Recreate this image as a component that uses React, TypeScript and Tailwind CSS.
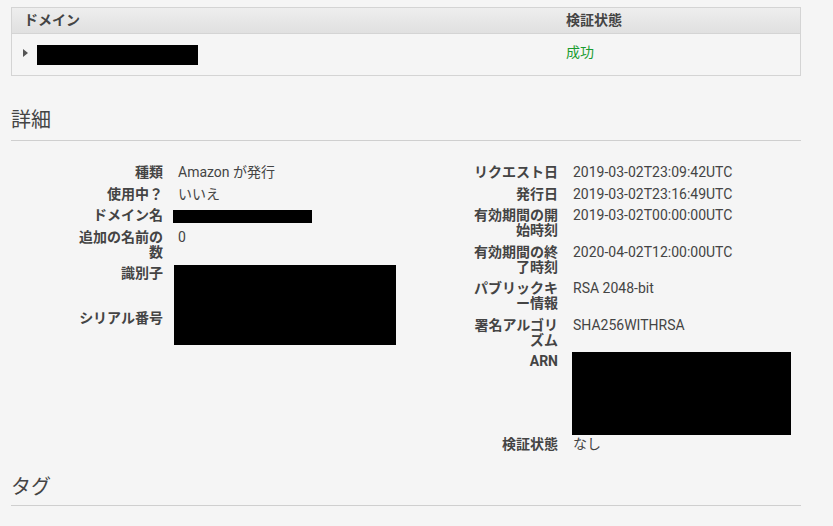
import React from 'react'

const font = { fontFamily: 'Roboto, "Noto Sans CJK JP", sans-serif' }

interface Row {
  label: string
  value?: string
}

const leftRows: Row[] = [
  { label: '種類', value: 'Amazon が発行' },
  { label: '使用中？', value: 'いいえ' },
  { label: 'ドメイン名', value: '__bar' },
  { label: '追加の名前の数', value: '0' },
]

const rightRows: Row[] = [
  { label: 'リクエスト日', value: '2019-03-02T23:09:42UTC' },
  { label: '発行日', value: '2019-03-02T23:16:49UTC' },
  { label: '有効期間の開始時刻', value: '2019-03-02T00:00:00UTC' },
  { label: '有効期間の終了時刻', value: '2020-04-02T12:00:00UTC' },
  { label: 'パブリックキー情報', value: 'RSA 2048-bit' },
  { label: '署名アルゴリズム', value: 'SHA256WITHRSA' },
]

function Label({ children, className = '' }: { children: React.ReactNode; className?: string }) {
  return (
    <div className={`pl-[64px] text-right font-bold text-[#444] break-all ${className}`}>{children}</div>
  )
}

function Value({ v }: { v?: string }) {
  if (v === '__bar') {
    // redacted domain
    return <div className="-ml-[5px] mt-[2px] h-[13px] w-[139px] bg-black" />
  }
  return <div className="text-[#444]">{v}</div>
}

export default function App() {
  return (
    <div className="min-h-[526px] w-[833px] bg-[#f5f5f5] pl-[11px] pt-[7px] text-[14px] leading-[15px]" style={font}>
      <div className="w-[790px] border border-[#d4d4d4]">
        <div className="flex h-[26px] items-center border-b border-[#d4d4d4] bg-gradient-to-b from-[#eeeeee] to-[#e0e0e0] font-bold text-[#444]">
          <div className="w-[542px] pl-[12px]">ドメイン</div>
          <div className="pl-[12px]">検証状態</div>
        </div>
        <div className="flex h-[41px] items-start pt-[11px]">
          <div className="flex w-[542px] items-start pl-[11px]">
            <span className="mt-[4px] h-0 w-0 border-y-[4px] border-l-[5px] border-y-transparent border-l-[#555]" />
            <span className="ml-[9px] h-[20px] w-[161px] bg-black" />
          </div>
          <div className="pl-[12px] text-[#1a9c30]">成功</div>
        </div>
      </div>

      <h2 className="mt-[32px] text-[20px] leading-[24px] text-[#444]">詳細</h2>
      <div className="mt-[8px] h-px w-[790px] bg-[#cfcfcf]" />

      <div className="mt-[24px] flex w-[790px]">
        <div className="grid w-[395px] grid-cols-[152px_1fr] content-start gap-x-[15px] gap-y-[6.5px]">
          {leftRows.map((r) => (
            <React.Fragment key={r.label}>
              <Label>{r.label}</Label>
              <Value v={r.value} />
            </React.Fragment>
          ))}
          <Label className="h-[38px]">識別子</Label>
          <div className="row-span-2 -ml-[4px] -mt-[1px] h-[80px] w-[222px] bg-black" />
          <Label className="h-[36px]">シリアル番号</Label>
        </div>
        <div className="grid w-[395px] grid-cols-[152px_1fr] content-start gap-x-[15px] gap-y-[6.5px]">
          {rightRows.map((r) => (
            <React.Fragment key={r.label}>
              <Label>{r.label}</Label>
              <Value v={r.value} />
            </React.Fragment>
          ))}
          <Label>ARN</Label>
          <div className="h-[76px]">
            <div className="-ml-[1px] -mt-[2px] h-[83px] w-[219px] bg-black" />
          </div>
          <Label>検証状態</Label>
          <div className="text-[#444]">なし</div>
        </div>
      </div>

      <h2 className="mt-[23px] text-[20px] leading-[24px] text-[#444]">タグ</h2>
      <div className="mt-[6px] h-px w-[790px] bg-[#cfcfcf]" />
    </div>
  )
}
